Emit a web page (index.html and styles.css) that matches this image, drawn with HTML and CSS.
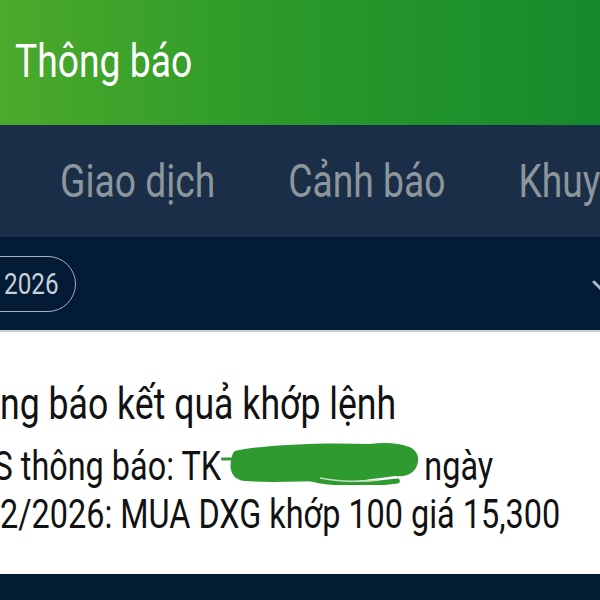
FILE: index.html
```html
<!DOCTYPE html>
<html lang="vi">
<head>
  <meta charset="UTF-8">
  <meta name="viewport" content="width=device-width, initial-scale=1.0">
  <title>Thông báo</title>
  <link rel="stylesheet" href="styles.css">
</head>
<body>
  <div class="screen">
    <header class="topbar">
      <h1 class="squeeze">Thông báo</h1>
    </header>

    <nav class="tabs">
      <div class="tab-row squeeze">
        <span class="tab">Giao dịch</span>
        <span class="tab">Cảnh báo</span>
        <span class="tab">Khuyến mãi</span>
      </div>
    </nav>

    <div class="filter">
      <span class="pill"><span class="squeeze">2026</span></span>
      <svg class="chevron" width="20" height="14" viewBox="0 0 20 14">
        <path d="M3 3 L10 10 L17 3" fill="none" stroke="#a7b9cc" stroke-width="3" stroke-linecap="round"/>
      </svg>
    </div>

    <div class="card">
      <div class="card-text squeeze">
        <div class="msg-title">ng báo kết quả khớp lệnh</div>
        <div class="msg-body">
          <p><span class="cut">S</span> thông báo: TK<svg class="scribble" width="247" height="46" viewBox="0 0 202 46" preserveAspectRatio="none">
            <path d="M0 20 L16 20" stroke="#2f9a2f" stroke-width="3" fill="none"/>
            <path d="M14 12 C40 6 100 3 150 5 C165 3 180 4 190 8 C200 12 201 22 196 30 C192 36 184 38 176 37 C150 40 130 44 110 42 C80 42 50 44 24 42 C12 41 8 32 10 22 C11 16 12 13 14 12 Z" fill="#2f9a2f"/>
            <path d="M84 38 C110 46 150 46 178 42" stroke="#2f9a2f" stroke-width="5" fill="none" stroke-linecap="round"/>
            <path d="M100 39 C120 43 145 43 160 41" stroke="#bfe0bf" stroke-width="1.5" fill="none"/>
          </svg>ngày</p>
          <p>2/2026: MUA DXG khớp 100 giá 15,300</p>
        </div>
      </div>
    </div>

    <div class="bottom"></div>
  </div>
</body>
</html>
```

FILE: styles.css
```css
* { box-sizing: border-box; margin: 0; padding: 0; }
html, body {
  width: 600px;
  height: 600px;
  overflow: hidden;
}
body {
  font-family: Roboto, 'Noto Sans', sans-serif;
  background: #021c33;
}
.screen {
  width: 600px;
  height: 600px;
  display: flex;
  flex-direction: column;
  overflow: hidden;
}
/* the phone text is narrow, squeeze it horizontally */
.squeeze {
  display: inline-block;
  transform: scaleX(0.81);
  transform-origin: left center;
}
.topbar {
  height: 125px;
  background: linear-gradient(90deg, #4caa2b 0%, #2c9a2a 45%, #158a2d 100%);
  display: flex;
  align-items: center;
  padding-left: 15px;
}
.topbar h1 {
  color: #fff;
  font-weight: 400;
  font-size: 46px;
  margin-top: -4px;
}
.tabs {
  height: 112px;
  background: #1a2f47;
  display: flex;
  align-items: center;
  padding-left: 60px;
  white-space: nowrap;
  overflow: hidden;
}
.tab-row {
  display: flex;
  gap: 90px;
}
.tab {
  color: #8d959d;
  font-size: 46px;
}
.filter {
  height: 95px;
  background: #031b34;
  display: flex;
  align-items: center;
  justify-content: space-between;
  border-bottom: 2px solid #c9cfd6;
}
.pill {
  margin-left: -40px;
  height: 56px;
  width: 116px;
  padding-left: 43px;
  border: 1.5px solid #a8b5c3;
  border-radius: 28px;
  display: flex;
  align-items: center;
  color: #c6d0da;
  font-size: 30px;
}
.chevron {
  margin-right: -11px;
  margin-top: 4px;
}
.card {
  height: 242px;
  background: #fff;
  padding-top: 44px;
  overflow: hidden;
  white-space: nowrap;
  color: #111;
}
.card-text {
  display: block;
}
.msg-title {
  font-size: 44px;
  line-height: 56px;
}
.msg-body {
  margin-top: 11px;
  font-size: 40px;
  line-height: 48px;
}
.cut {
  display: inline-block;
  margin-left: -8px;
}
.scribble {
  vertical-align: middle;
  margin: -14px 4px 0 0;
}
.bottom {
  flex: 1;
  background: #021c33;
}
```
